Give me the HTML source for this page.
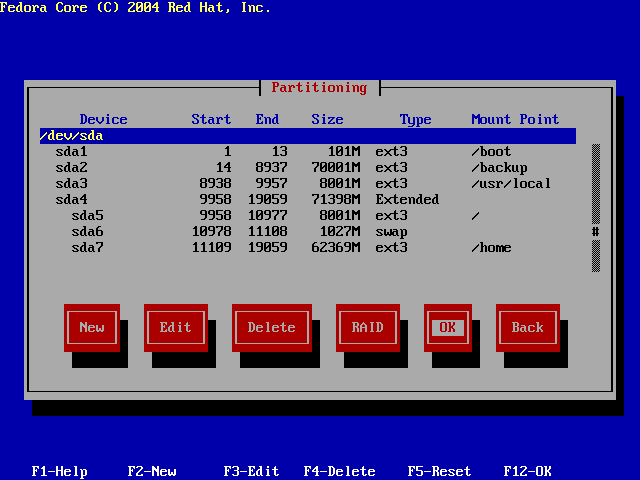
<!DOCTYPE html><html><head><meta charset="utf-8"><style>html,body{margin:0;padding:0;background:#0000aa;overflow:hidden;width:640px;height:480px}svg{display:block}</style></head><body>
<svg width="640" height="480" viewBox="0 0 640 480" shape-rendering="crispEdges">
<defs><path id="g0" d="M1 3h2v2h-2zM1 6h2v3h-2zM1 10h2v2h-2zM4 3h2v2h-2zM4 6h2v3h-2zM4 10h2v2h-2zM0 5h7v1h-7zM0 9h7v1h-7z"/><path id="g1" d="M4 2h2v1h-2zM4 11h2v1h-2zM3 3h2v1h-2zM3 10h2v1h-2zM2 4h2v6h-2z"/><path id="g2" d="M2 2h2v1h-2zM2 11h2v1h-2zM3 3h2v1h-2zM3 10h2v1h-2zM4 4h2v6h-2z"/><path id="g3" d="M3 9h2v3h-2zM2 12h2v1h-2z"/><path id="g4" d="M0 7h7v1h-7z"/><path id="g5" d="M3 10h2v2h-2z"/><path id="g6" d="M6 4h1v1h-1zM5 5h2v1h-2zM4 6h2v1h-2zM3 7h2v1h-2zM2 8h2v1h-2zM1 9h2v1h-2zM0 10h2v1h-2zM0 11h1v1h-1z"/><path id="g7" d="M1 2h5v1h-5zM1 11h5v1h-5zM0 3h2v4h-2zM0 9h2v2h-2zM5 3h2v2h-2zM5 7h2v4h-2zM4 5h3v1h-3zM3 6h4v1h-4zM0 7h4v1h-4zM0 8h3v1h-3z"/><path id="g8" d="M3 2h2v1h-2zM3 5h2v6h-2zM2 3h3v1h-3zM1 4h4v1h-4zM1 11h6v1h-6z"/><path id="g9" d="M1 2h5v1h-5zM0 3h2v1h-2zM0 9h2v2h-2zM5 3h2v2h-2zM5 10h2v1h-2zM4 5h2v1h-2zM3 6h2v1h-2zM2 7h2v1h-2zM1 8h2v1h-2zM0 11h7v1h-7z"/><path id="g10" d="M1 2h5v1h-5zM1 11h5v1h-5zM0 3h2v1h-2zM0 10h2v1h-2zM5 3h2v3h-2zM5 7h2v4h-2zM2 6h4v1h-4z"/><path id="g11" d="M4 2h2v1h-2zM4 5h2v2h-2zM4 8h2v3h-2zM3 3h3v1h-3zM2 4h4v1h-4zM1 5h2v1h-2zM0 6h2v1h-2zM0 7h7v1h-7zM3 11h4v1h-4z"/><path id="g12" d="M0 2h7v1h-7zM0 3h2v3h-2zM0 10h2v1h-2zM0 6h6v1h-6zM5 7h2v4h-2zM1 11h5v1h-5z"/><path id="g13" d="M2 2h3v1h-3zM1 3h2v1h-2zM0 4h2v2h-2zM0 7h2v4h-2zM0 6h6v1h-6zM5 7h2v4h-2zM1 11h5v1h-5z"/><path id="g14" d="M0 2h7v1h-7zM0 3h2v1h-2zM5 3h2v3h-2zM4 6h2v1h-2zM3 7h2v1h-2zM2 8h2v4h-2z"/><path id="g15" d="M1 2h5v1h-5zM1 6h5v1h-5zM1 11h5v1h-5zM0 3h2v3h-2zM0 7h2v4h-2zM5 3h2v3h-2zM5 7h2v4h-2z"/><path id="g16" d="M1 2h5v1h-5zM0 3h2v3h-2zM5 3h2v3h-2zM5 7h2v3h-2zM1 6h6v1h-6zM4 10h2v1h-2zM1 11h4v1h-4z"/><path id="g17" d="M3 2h1v1h-1zM2 3h3v1h-3zM1 4h2v1h-2zM4 4h2v1h-2zM0 5h2v2h-2zM0 8h2v4h-2zM5 5h2v2h-2zM5 8h2v4h-2zM0 7h7v1h-7z"/><path id="g18" d="M0 2h6v1h-6zM0 11h6v1h-6zM1 3h2v3h-2zM1 7h2v4h-2zM5 3h2v3h-2zM5 7h2v4h-2zM1 6h5v1h-5z"/><path id="g19" d="M2 2h4v1h-4zM2 11h4v1h-4zM1 3h2v1h-2zM1 10h2v1h-2zM5 3h2v1h-2zM5 10h2v1h-2zM0 4h2v6h-2zM6 4h1v1h-1zM6 9h1v1h-1z"/><path id="g20" d="M0 2h5v1h-5zM0 11h5v1h-5zM1 3h2v8h-2zM4 3h2v1h-2zM4 10h2v1h-2zM5 4h2v6h-2z"/><path id="g21" d="M0 2h7v1h-7zM0 11h7v1h-7zM1 3h2v3h-2zM1 7h2v4h-2zM5 3h2v1h-2zM5 10h2v1h-2zM6 4h1v1h-1zM6 9h1v1h-1zM4 5h1v1h-1zM4 7h1v1h-1zM1 6h4v1h-4z"/><path id="g22" d="M0 2h7v1h-7zM1 3h2v3h-2zM1 7h2v4h-2zM5 3h2v1h-2zM6 4h1v1h-1zM4 5h1v1h-1zM4 7h1v1h-1zM1 6h4v1h-4zM0 11h4v1h-4z"/><path id="g23" d="M0 2h2v4h-2zM0 7h2v5h-2zM5 2h2v4h-2zM5 7h2v5h-2zM0 6h7v1h-7z"/><path id="g24" d="M2 2h4v1h-4zM2 11h4v1h-4zM3 3h2v8h-2z"/><path id="g25" d="M0 2h3v1h-3zM0 11h3v1h-3zM5 2h2v3h-2zM5 9h2v3h-2zM1 3h2v3h-2zM1 8h2v3h-2zM4 5h2v1h-2zM4 8h2v1h-2zM1 6h4v2h-4z"/><path id="g26" d="M0 2h2v1h-2zM0 6h2v6h-2zM6 2h2v1h-2zM6 6h2v6h-2zM0 3h3v1h-3zM5 3h3v1h-3zM0 4h8v2h-8zM3 6h2v1h-2z"/><path id="g27" d="M0 2h2v1h-2zM0 6h2v6h-2zM5 2h2v3h-2zM5 8h2v4h-2zM0 3h3v1h-3zM0 4h4v1h-4zM0 5h7v1h-7zM3 6h4v1h-4zM4 7h3v1h-3z"/><path id="g28" d="M1 2h5v1h-5zM1 11h5v1h-5zM0 3h2v8h-2zM5 3h2v8h-2z"/><path id="g29" d="M0 2h6v1h-6zM1 3h2v3h-2zM1 7h2v4h-2zM5 3h2v3h-2zM1 6h5v1h-5zM0 11h4v1h-4z"/><path id="g30" d="M0 2h6v1h-6zM1 3h2v3h-2zM1 7h2v4h-2zM5 3h2v3h-2zM5 8h2v4h-2zM1 6h5v1h-5zM4 7h2v1h-2zM0 11h3v1h-3z"/><path id="g31" d="M1 2h5v1h-5zM1 11h5v1h-5zM0 3h2v2h-2zM0 9h2v2h-2zM5 3h2v2h-2zM5 8h2v3h-2zM1 5h2v1h-2zM2 6h3v1h-3zM4 7h2v1h-2z"/><path id="g32" d="M0 2h8v1h-8zM0 3h2v1h-2zM3 3h2v8h-2zM6 3h2v1h-2zM0 4h1v1h-1zM7 4h1v1h-1zM2 11h4v1h-4z"/><path id="g33" d="M1 5h4v1h-4zM4 6h2v1h-2zM4 8h2v3h-2zM1 7h5v1h-5zM0 8h2v3h-2zM1 11h3v1h-3zM5 11h2v1h-2z"/><path id="g34" d="M0 2h3v1h-3zM1 3h2v2h-2zM1 6h2v5h-2zM1 5h4v1h-4zM4 6h2v1h-2zM5 7h2v4h-2zM1 11h5v1h-5z"/><path id="g35" d="M1 5h5v1h-5zM1 11h5v1h-5zM0 6h2v5h-2zM5 6h2v1h-2zM5 10h2v1h-2z"/><path id="g36" d="M3 2h3v1h-3zM4 3h2v2h-2zM4 6h2v5h-2zM2 5h4v1h-4zM1 6h2v1h-2zM0 7h2v4h-2zM1 11h3v1h-3zM5 11h2v1h-2z"/><path id="g37" d="M1 5h5v1h-5zM1 11h5v1h-5zM0 6h2v1h-2zM0 8h2v3h-2zM5 6h2v1h-2zM5 10h2v1h-2zM0 7h7v1h-7z"/><path id="g38" d="M1 5h3v1h-3zM5 5h2v1h-2zM0 6h2v5h-2zM0 13h2v1h-2zM4 6h2v5h-2zM4 12h2v2h-2zM1 11h5v1h-5zM1 14h4v1h-4z"/><path id="g39" d="M0 2h3v1h-3zM0 11h3v1h-3zM1 3h2v3h-2zM1 7h2v4h-2zM4 5h2v1h-2zM1 6h3v1h-3zM5 6h2v6h-2z"/><path id="g40" d="M3 2h2v2h-2zM3 6h2v5h-2zM2 5h3v1h-3zM2 11h4v1h-4z"/><path id="g41" d="M0 2h3v1h-3zM0 11h3v1h-3zM1 3h2v4h-2zM1 9h2v2h-2zM5 5h2v1h-2zM5 10h2v2h-2zM4 6h2v1h-2zM4 9h2v1h-2zM1 7h4v2h-4z"/><path id="g42" d="M2 2h3v1h-3zM3 3h2v8h-2zM2 11h4v1h-4z"/><path id="g43" d="M0 5h3v1h-3zM5 5h2v1h-2zM0 6h8v1h-8zM0 7h2v5h-2zM3 7h2v5h-2zM6 7h2v5h-2z"/><path id="g44" d="M0 5h2v1h-2zM3 5h3v1h-3zM1 6h2v6h-2zM5 6h2v6h-2z"/><path id="g45" d="M1 5h5v1h-5zM1 11h5v1h-5zM0 6h2v5h-2zM5 6h2v5h-2z"/><path id="g46" d="M0 5h2v1h-2zM3 5h3v1h-3zM1 6h2v5h-2zM1 12h2v2h-2zM5 6h2v5h-2zM1 11h5v1h-5zM0 14h4v1h-4z"/><path id="g47" d="M0 5h2v1h-2zM3 5h3v1h-3zM1 6h3v1h-3zM5 6h2v2h-2zM1 7h2v4h-2zM0 11h4v1h-4z"/><path id="g48" d="M1 5h5v1h-5zM1 11h5v1h-5zM0 6h2v1h-2zM0 10h2v1h-2zM5 6h2v1h-2zM5 10h2v1h-2zM1 7h2v1h-2zM2 8h3v1h-3zM4 9h2v1h-2z"/><path id="g49" d="M3 2h1v1h-1zM2 3h2v2h-2zM2 6h2v5h-2zM0 5h6v1h-6zM5 10h2v1h-2zM3 11h3v1h-3z"/><path id="g50" d="M0 5h2v6h-2zM4 5h2v6h-2zM1 11h3v1h-3zM5 11h2v1h-2z"/><path id="g51" d="M0 5h2v4h-2zM6 5h2v4h-2zM1 9h2v1h-2zM5 9h2v1h-2zM2 10h4v1h-4zM3 11h2v1h-2z"/><path id="g52" d="M0 5h2v5h-2zM6 5h2v5h-2zM3 8h2v2h-2zM0 10h8v1h-8zM1 11h2v1h-2zM5 11h2v1h-2z"/><path id="g53" d="M0 5h2v1h-2zM0 11h2v1h-2zM6 5h2v1h-2zM6 11h2v1h-2zM1 6h2v1h-2zM1 10h2v1h-2zM5 6h2v1h-2zM5 10h2v1h-2zM2 7h4v1h-4zM2 9h4v1h-4zM3 8h2v1h-2z"/><path id="g54" d="M0 5h2v6h-2zM5 5h2v6h-2zM5 12h2v1h-2zM1 11h6v1h-6zM4 13h2v1h-2zM0 14h5v1h-5z"/><path id="g55" d="M0 5h7v1h-7zM0 11h7v1h-7zM0 6h2v1h-2zM0 10h2v1h-2zM4 6h2v1h-2zM3 7h2v1h-2zM2 8h2v1h-2zM1 9h2v1h-2zM5 10h2v1h-2z"/><path id="g56" d="M0 7h8v1h-8z"/><path id="g57" d="M3 0h2v16h-2z"/><path id="g58" d="M3 7h5v1h-5zM3 8h2v8h-2z"/><path id="g59" d="M0 7h5v1h-5zM3 8h2v8h-2z"/><path id="g60" d="M3 0h2v7h-2zM3 7h5v1h-5z"/><path id="g61" d="M3 0h2v7h-2zM0 7h5v1h-5z"/><path id="g62" d="M3 0h2v7h-2zM3 8h2v8h-2zM3 7h5v1h-5z"/><path id="g63" d="M3 0h2v7h-2zM3 8h2v8h-2zM0 7h5v1h-5z"/><path id="g64" d="M1 0h1v1h-1zM1 2h1v1h-1zM1 4h1v1h-1zM1 6h1v1h-1zM1 8h1v1h-1zM1 10h1v1h-1zM1 12h1v1h-1zM1 14h1v1h-1zM3 0h1v1h-1zM3 2h1v1h-1zM3 4h1v1h-1zM3 6h1v1h-1zM3 8h1v1h-1zM3 10h1v1h-1zM3 12h1v1h-1zM3 14h1v1h-1zM5 0h1v1h-1zM5 2h1v1h-1zM5 4h1v1h-1zM5 6h1v1h-1zM5 8h1v1h-1zM5 10h1v1h-1zM5 12h1v1h-1zM5 14h1v1h-1zM7 0h1v1h-1zM7 2h1v1h-1zM7 4h1v1h-1zM7 6h1v1h-1zM7 8h1v1h-1zM7 10h1v1h-1zM7 12h1v1h-1zM7 14h1v1h-1zM0 1h1v1h-1zM0 3h1v1h-1zM0 5h1v1h-1zM0 7h1v1h-1zM0 9h1v1h-1zM0 11h1v1h-1zM0 13h1v1h-1zM0 15h1v1h-1zM2 1h1v1h-1zM2 3h1v1h-1zM2 5h1v1h-1zM2 7h1v1h-1zM2 9h1v1h-1zM2 11h1v1h-1zM2 13h1v1h-1zM2 15h1v1h-1zM4 1h1v1h-1zM4 3h1v1h-1zM4 5h1v1h-1zM4 7h1v1h-1zM4 9h1v1h-1zM4 11h1v1h-1zM4 13h1v1h-1zM4 15h1v1h-1zM6 1h1v1h-1zM6 3h1v1h-1zM6 5h1v1h-1zM6 7h1v1h-1zM6 9h1v1h-1zM6 11h1v1h-1zM6 13h1v1h-1zM6 15h1v1h-1z"/></defs>
<rect width="640" height="480" fill="#0000aa"/>
<rect x="24" y="80" width="592" height="16" fill="#aaaaaa"/><rect x="24" y="96" width="592" height="16" fill="#aaaaaa"/><rect x="616" y="96" width="8" height="16" fill="#000000"/><rect x="24" y="112" width="592" height="16" fill="#aaaaaa"/><rect x="616" y="112" width="8" height="16" fill="#000000"/><rect x="24" y="128" width="16" height="16" fill="#aaaaaa"/><rect x="576" y="128" width="40" height="16" fill="#aaaaaa"/><rect x="616" y="128" width="8" height="16" fill="#000000"/><rect x="24" y="144" width="592" height="16" fill="#aaaaaa"/><rect x="616" y="144" width="8" height="16" fill="#000000"/><rect x="24" y="160" width="592" height="16" fill="#aaaaaa"/><rect x="616" y="160" width="8" height="16" fill="#000000"/><rect x="24" y="176" width="592" height="16" fill="#aaaaaa"/><rect x="616" y="176" width="8" height="16" fill="#000000"/><rect x="24" y="192" width="592" height="16" fill="#aaaaaa"/><rect x="616" y="192" width="8" height="16" fill="#000000"/><rect x="24" y="208" width="592" height="16" fill="#aaaaaa"/><rect x="616" y="208" width="8" height="16" fill="#000000"/><rect x="24" y="224" width="592" height="16" fill="#aaaaaa"/><rect x="616" y="224" width="8" height="16" fill="#000000"/><rect x="24" y="240" width="592" height="16" fill="#aaaaaa"/><rect x="616" y="240" width="8" height="16" fill="#000000"/><rect x="24" y="256" width="592" height="16" fill="#aaaaaa"/><rect x="616" y="256" width="8" height="16" fill="#000000"/><rect x="24" y="272" width="592" height="16" fill="#aaaaaa"/><rect x="616" y="272" width="8" height="16" fill="#000000"/><rect x="24" y="288" width="592" height="16" fill="#aaaaaa"/><rect x="616" y="288" width="8" height="16" fill="#000000"/><rect x="24" y="304" width="40" height="16" fill="#aaaaaa"/><rect x="64" y="304" width="56" height="16" fill="#aa0000"/><rect x="120" y="304" width="24" height="16" fill="#aaaaaa"/><rect x="144" y="304" width="64" height="16" fill="#aa0000"/><rect x="208" y="304" width="24" height="16" fill="#aaaaaa"/><rect x="232" y="304" width="80" height="16" fill="#aa0000"/><rect x="312" y="304" width="24" height="16" fill="#aaaaaa"/><rect x="336" y="304" width="64" height="16" fill="#aa0000"/><rect x="400" y="304" width="24" height="16" fill="#aaaaaa"/><rect x="424" y="304" width="48" height="16" fill="#aa0000"/><rect x="472" y="304" width="24" height="16" fill="#aaaaaa"/><rect x="496" y="304" width="64" height="16" fill="#aa0000"/><rect x="560" y="304" width="56" height="16" fill="#aaaaaa"/><rect x="616" y="304" width="8" height="16" fill="#000000"/><rect x="24" y="320" width="40" height="16" fill="#aaaaaa"/><rect x="64" y="320" width="56" height="16" fill="#aa0000"/><rect x="120" y="320" width="8" height="16" fill="#000000"/><rect x="128" y="320" width="16" height="16" fill="#aaaaaa"/><rect x="144" y="320" width="64" height="16" fill="#aa0000"/><rect x="208" y="320" width="8" height="16" fill="#000000"/><rect x="216" y="320" width="16" height="16" fill="#aaaaaa"/><rect x="232" y="320" width="80" height="16" fill="#aa0000"/><rect x="312" y="320" width="8" height="16" fill="#000000"/><rect x="320" y="320" width="16" height="16" fill="#aaaaaa"/><rect x="336" y="320" width="64" height="16" fill="#aa0000"/><rect x="400" y="320" width="8" height="16" fill="#000000"/><rect x="408" y="320" width="16" height="16" fill="#aaaaaa"/><rect x="424" y="320" width="8" height="16" fill="#aa0000"/><rect x="432" y="320" width="32" height="16" fill="#aaaaaa"/><rect x="464" y="320" width="8" height="16" fill="#aa0000"/><rect x="472" y="320" width="8" height="16" fill="#000000"/><rect x="480" y="320" width="16" height="16" fill="#aaaaaa"/><rect x="496" y="320" width="64" height="16" fill="#aa0000"/><rect x="560" y="320" width="8" height="16" fill="#000000"/><rect x="568" y="320" width="48" height="16" fill="#aaaaaa"/><rect x="616" y="320" width="8" height="16" fill="#000000"/><rect x="24" y="336" width="40" height="16" fill="#aaaaaa"/><rect x="64" y="336" width="56" height="16" fill="#aa0000"/><rect x="120" y="336" width="8" height="16" fill="#000000"/><rect x="128" y="336" width="16" height="16" fill="#aaaaaa"/><rect x="144" y="336" width="64" height="16" fill="#aa0000"/><rect x="208" y="336" width="8" height="16" fill="#000000"/><rect x="216" y="336" width="16" height="16" fill="#aaaaaa"/><rect x="232" y="336" width="80" height="16" fill="#aa0000"/><rect x="312" y="336" width="8" height="16" fill="#000000"/><rect x="320" y="336" width="16" height="16" fill="#aaaaaa"/><rect x="336" y="336" width="64" height="16" fill="#aa0000"/><rect x="400" y="336" width="8" height="16" fill="#000000"/><rect x="408" y="336" width="16" height="16" fill="#aaaaaa"/><rect x="424" y="336" width="48" height="16" fill="#aa0000"/><rect x="472" y="336" width="8" height="16" fill="#000000"/><rect x="480" y="336" width="16" height="16" fill="#aaaaaa"/><rect x="496" y="336" width="64" height="16" fill="#aa0000"/><rect x="560" y="336" width="8" height="16" fill="#000000"/><rect x="568" y="336" width="48" height="16" fill="#aaaaaa"/><rect x="616" y="336" width="8" height="16" fill="#000000"/><rect x="24" y="352" width="48" height="16" fill="#aaaaaa"/><rect x="72" y="352" width="56" height="16" fill="#000000"/><rect x="128" y="352" width="24" height="16" fill="#aaaaaa"/><rect x="152" y="352" width="64" height="16" fill="#000000"/><rect x="216" y="352" width="24" height="16" fill="#aaaaaa"/><rect x="240" y="352" width="80" height="16" fill="#000000"/><rect x="320" y="352" width="24" height="16" fill="#aaaaaa"/><rect x="344" y="352" width="64" height="16" fill="#000000"/><rect x="408" y="352" width="24" height="16" fill="#aaaaaa"/><rect x="432" y="352" width="48" height="16" fill="#000000"/><rect x="480" y="352" width="24" height="16" fill="#aaaaaa"/><rect x="504" y="352" width="64" height="16" fill="#000000"/><rect x="568" y="352" width="48" height="16" fill="#aaaaaa"/><rect x="616" y="352" width="8" height="16" fill="#000000"/><rect x="24" y="368" width="592" height="16" fill="#aaaaaa"/><rect x="616" y="368" width="8" height="16" fill="#000000"/><rect x="24" y="384" width="592" height="16" fill="#aaaaaa"/><rect x="616" y="384" width="8" height="16" fill="#000000"/><rect x="32" y="400" width="592" height="16" fill="#000000"/>
<g fill="#ffff55"><use href="#g22" x="0" y="0"/><use href="#g37" x="8" y="0"/><use href="#g36" x="16" y="0"/><use href="#g45" x="24" y="0"/><use href="#g47" x="32" y="0"/><use href="#g33" x="40" y="0"/><use href="#g19" x="56" y="0"/><use href="#g45" x="64" y="0"/><use href="#g47" x="72" y="0"/><use href="#g37" x="80" y="0"/><use href="#g1" x="96" y="0"/><use href="#g19" x="104" y="0"/><use href="#g2" x="112" y="0"/><use href="#g9" x="128" y="0"/><use href="#g7" x="136" y="0"/><use href="#g7" x="144" y="0"/><use href="#g11" x="152" y="0"/><use href="#g30" x="168" y="0"/><use href="#g37" x="176" y="0"/><use href="#g36" x="184" y="0"/><use href="#g23" x="200" y="0"/><use href="#g33" x="208" y="0"/><use href="#g49" x="216" y="0"/><use href="#g3" x="224" y="0"/><use href="#g24" x="240" y="0"/><use href="#g44" x="248" y="0"/><use href="#g35" x="256" y="0"/><use href="#g5" x="264" y="0"/><use href="#g6" x="40" y="128"/><use href="#g36" x="48" y="128"/><use href="#g37" x="56" y="128"/><use href="#g51" x="64" y="128"/><use href="#g6" x="72" y="128"/><use href="#g48" x="80" y="128"/><use href="#g36" x="88" y="128"/><use href="#g33" x="96" y="128"/></g>
<g fill="#000000"><use href="#g58" x="24" y="80"/><use href="#g56" x="32" y="80"/><use href="#g56" x="40" y="80"/><use href="#g56" x="48" y="80"/><use href="#g56" x="56" y="80"/><use href="#g56" x="64" y="80"/><use href="#g56" x="72" y="80"/><use href="#g56" x="80" y="80"/><use href="#g56" x="88" y="80"/><use href="#g56" x="96" y="80"/><use href="#g56" x="104" y="80"/><use href="#g56" x="112" y="80"/><use href="#g56" x="120" y="80"/><use href="#g56" x="128" y="80"/><use href="#g56" x="136" y="80"/><use href="#g56" x="144" y="80"/><use href="#g56" x="152" y="80"/><use href="#g56" x="160" y="80"/><use href="#g56" x="168" y="80"/><use href="#g56" x="176" y="80"/><use href="#g56" x="184" y="80"/><use href="#g56" x="192" y="80"/><use href="#g56" x="200" y="80"/><use href="#g56" x="208" y="80"/><use href="#g56" x="216" y="80"/><use href="#g56" x="224" y="80"/><use href="#g56" x="232" y="80"/><use href="#g56" x="240" y="80"/><use href="#g56" x="248" y="80"/><use href="#g63" x="256" y="80"/><use href="#g62" x="376" y="80"/><use href="#g56" x="384" y="80"/><use href="#g56" x="392" y="80"/><use href="#g56" x="400" y="80"/><use href="#g56" x="408" y="80"/><use href="#g56" x="416" y="80"/><use href="#g56" x="424" y="80"/><use href="#g56" x="432" y="80"/><use href="#g56" x="440" y="80"/><use href="#g56" x="448" y="80"/><use href="#g56" x="456" y="80"/><use href="#g56" x="464" y="80"/><use href="#g56" x="472" y="80"/><use href="#g56" x="480" y="80"/><use href="#g56" x="488" y="80"/><use href="#g56" x="496" y="80"/><use href="#g56" x="504" y="80"/><use href="#g56" x="512" y="80"/><use href="#g56" x="520" y="80"/><use href="#g56" x="528" y="80"/><use href="#g56" x="536" y="80"/><use href="#g56" x="544" y="80"/><use href="#g56" x="552" y="80"/><use href="#g56" x="560" y="80"/><use href="#g56" x="568" y="80"/><use href="#g56" x="576" y="80"/><use href="#g56" x="584" y="80"/><use href="#g56" x="592" y="80"/><use href="#g56" x="600" y="80"/><use href="#g59" x="608" y="80"/><use href="#g57" x="24" y="96"/><use href="#g57" x="608" y="96"/><use href="#g57" x="24" y="112"/><use href="#g57" x="608" y="112"/><use href="#g57" x="24" y="128"/><use href="#g57" x="608" y="128"/><use href="#g57" x="24" y="144"/><use href="#g48" x="56" y="144"/><use href="#g36" x="64" y="144"/><use href="#g33" x="72" y="144"/><use href="#g8" x="80" y="144"/><use href="#g8" x="224" y="144"/><use href="#g8" x="272" y="144"/><use href="#g10" x="280" y="144"/><use href="#g8" x="328" y="144"/><use href="#g7" x="336" y="144"/><use href="#g8" x="344" y="144"/><use href="#g26" x="352" y="144"/><use href="#g37" x="376" y="144"/><use href="#g53" x="384" y="144"/><use href="#g49" x="392" y="144"/><use href="#g10" x="400" y="144"/><use href="#g6" x="472" y="144"/><use href="#g34" x="480" y="144"/><use href="#g45" x="488" y="144"/><use href="#g45" x="496" y="144"/><use href="#g49" x="504" y="144"/><use href="#g64" x="592" y="144"/><use href="#g57" x="608" y="144"/><use href="#g57" x="24" y="160"/><use href="#g48" x="56" y="160"/><use href="#g36" x="64" y="160"/><use href="#g33" x="72" y="160"/><use href="#g9" x="80" y="160"/><use href="#g8" x="216" y="160"/><use href="#g11" x="224" y="160"/><use href="#g15" x="256" y="160"/><use href="#g16" x="264" y="160"/><use href="#g10" x="272" y="160"/><use href="#g14" x="280" y="160"/><use href="#g14" x="312" y="160"/><use href="#g7" x="320" y="160"/><use href="#g7" x="328" y="160"/><use href="#g7" x="336" y="160"/><use href="#g8" x="344" y="160"/><use href="#g26" x="352" y="160"/><use href="#g37" x="376" y="160"/><use href="#g53" x="384" y="160"/><use href="#g49" x="392" y="160"/><use href="#g10" x="400" y="160"/><use href="#g6" x="472" y="160"/><use href="#g34" x="480" y="160"/><use href="#g33" x="488" y="160"/><use href="#g35" x="496" y="160"/><use href="#g41" x="504" y="160"/><use href="#g50" x="512" y="160"/><use href="#g46" x="520" y="160"/><use href="#g64" x="592" y="160"/><use href="#g57" x="608" y="160"/><use href="#g57" x="24" y="176"/><use href="#g48" x="56" y="176"/><use href="#g36" x="64" y="176"/><use href="#g33" x="72" y="176"/><use href="#g10" x="80" y="176"/><use href="#g15" x="200" y="176"/><use href="#g16" x="208" y="176"/><use href="#g10" x="216" y="176"/><use href="#g15" x="224" y="176"/><use href="#g16" x="256" y="176"/><use href="#g16" x="264" y="176"/><use href="#g12" x="272" y="176"/><use href="#g14" x="280" y="176"/><use href="#g15" x="320" y="176"/><use href="#g7" x="328" y="176"/><use href="#g7" x="336" y="176"/><use href="#g8" x="344" y="176"/><use href="#g26" x="352" y="176"/><use href="#g37" x="376" y="176"/><use href="#g53" x="384" y="176"/><use href="#g49" x="392" y="176"/><use href="#g10" x="400" y="176"/><use href="#g6" x="472" y="176"/><use href="#g50" x="480" y="176"/><use href="#g48" x="488" y="176"/><use href="#g47" x="496" y="176"/><use href="#g6" x="504" y="176"/><use href="#g42" x="512" y="176"/><use href="#g45" x="520" y="176"/><use href="#g35" x="528" y="176"/><use href="#g33" x="536" y="176"/><use href="#g42" x="544" y="176"/><use href="#g64" x="592" y="176"/><use href="#g57" x="608" y="176"/><use href="#g57" x="24" y="192"/><use href="#g48" x="56" y="192"/><use href="#g36" x="64" y="192"/><use href="#g33" x="72" y="192"/><use href="#g11" x="80" y="192"/><use href="#g16" x="200" y="192"/><use href="#g16" x="208" y="192"/><use href="#g12" x="216" y="192"/><use href="#g15" x="224" y="192"/><use href="#g8" x="248" y="192"/><use href="#g16" x="256" y="192"/><use href="#g7" x="264" y="192"/><use href="#g12" x="272" y="192"/><use href="#g16" x="280" y="192"/><use href="#g14" x="312" y="192"/><use href="#g8" x="320" y="192"/><use href="#g10" x="328" y="192"/><use href="#g16" x="336" y="192"/><use href="#g15" x="344" y="192"/><use href="#g26" x="352" y="192"/><use href="#g21" x="376" y="192"/><use href="#g53" x="384" y="192"/><use href="#g49" x="392" y="192"/><use href="#g37" x="400" y="192"/><use href="#g44" x="408" y="192"/><use href="#g36" x="416" y="192"/><use href="#g37" x="424" y="192"/><use href="#g36" x="432" y="192"/><use href="#g64" x="592" y="192"/><use href="#g57" x="608" y="192"/><use href="#g57" x="24" y="208"/><use href="#g48" x="72" y="208"/><use href="#g36" x="80" y="208"/><use href="#g33" x="88" y="208"/><use href="#g12" x="96" y="208"/><use href="#g16" x="200" y="208"/><use href="#g16" x="208" y="208"/><use href="#g12" x="216" y="208"/><use href="#g15" x="224" y="208"/><use href="#g8" x="248" y="208"/><use href="#g7" x="256" y="208"/><use href="#g16" x="264" y="208"/><use href="#g14" x="272" y="208"/><use href="#g14" x="280" y="208"/><use href="#g15" x="320" y="208"/><use href="#g7" x="328" y="208"/><use href="#g7" x="336" y="208"/><use href="#g8" x="344" y="208"/><use href="#g26" x="352" y="208"/><use href="#g37" x="376" y="208"/><use href="#g53" x="384" y="208"/><use href="#g49" x="392" y="208"/><use href="#g10" x="400" y="208"/><use href="#g6" x="472" y="208"/><use href="#g64" x="592" y="208"/><use href="#g57" x="608" y="208"/><use href="#g57" x="24" y="224"/><use href="#g48" x="72" y="224"/><use href="#g36" x="80" y="224"/><use href="#g33" x="88" y="224"/><use href="#g13" x="96" y="224"/><use href="#g8" x="192" y="224"/><use href="#g7" x="200" y="224"/><use href="#g16" x="208" y="224"/><use href="#g14" x="216" y="224"/><use href="#g15" x="224" y="224"/><use href="#g8" x="248" y="224"/><use href="#g8" x="256" y="224"/><use href="#g8" x="264" y="224"/><use href="#g7" x="272" y="224"/><use href="#g15" x="280" y="224"/><use href="#g8" x="320" y="224"/><use href="#g7" x="328" y="224"/><use href="#g9" x="336" y="224"/><use href="#g14" x="344" y="224"/><use href="#g26" x="352" y="224"/><use href="#g48" x="376" y="224"/><use href="#g52" x="384" y="224"/><use href="#g33" x="392" y="224"/><use href="#g46" x="400" y="224"/><use href="#g0" x="592" y="224"/><use href="#g57" x="608" y="224"/><use href="#g57" x="24" y="240"/><use href="#g48" x="72" y="240"/><use href="#g36" x="80" y="240"/><use href="#g33" x="88" y="240"/><use href="#g14" x="96" y="240"/><use href="#g8" x="192" y="240"/><use href="#g8" x="200" y="240"/><use href="#g8" x="208" y="240"/><use href="#g7" x="216" y="240"/><use href="#g16" x="224" y="240"/><use href="#g8" x="248" y="240"/><use href="#g16" x="256" y="240"/><use href="#g7" x="264" y="240"/><use href="#g12" x="272" y="240"/><use href="#g16" x="280" y="240"/><use href="#g13" x="312" y="240"/><use href="#g9" x="320" y="240"/><use href="#g10" x="328" y="240"/><use href="#g13" x="336" y="240"/><use href="#g16" x="344" y="240"/><use href="#g26" x="352" y="240"/><use href="#g37" x="376" y="240"/><use href="#g53" x="384" y="240"/><use href="#g49" x="392" y="240"/><use href="#g10" x="400" y="240"/><use href="#g6" x="472" y="240"/><use href="#g39" x="480" y="240"/><use href="#g45" x="488" y="240"/><use href="#g43" x="496" y="240"/><use href="#g37" x="504" y="240"/><use href="#g64" x="592" y="240"/><use href="#g57" x="608" y="240"/><use href="#g57" x="24" y="256"/><use href="#g64" x="592" y="256"/><use href="#g57" x="608" y="256"/><use href="#g57" x="24" y="272"/><use href="#g57" x="608" y="272"/><use href="#g57" x="24" y="288"/><use href="#g57" x="608" y="288"/><use href="#g57" x="24" y="304"/><use href="#g57" x="608" y="304"/><use href="#g57" x="24" y="320"/><use href="#g57" x="608" y="320"/><use href="#g57" x="24" y="336"/><use href="#g57" x="608" y="336"/><use href="#g57" x="24" y="352"/><use href="#g57" x="608" y="352"/><use href="#g57" x="24" y="368"/><use href="#g57" x="608" y="368"/><use href="#g60" x="24" y="384"/><use href="#g56" x="32" y="384"/><use href="#g56" x="40" y="384"/><use href="#g56" x="48" y="384"/><use href="#g56" x="56" y="384"/><use href="#g56" x="64" y="384"/><use href="#g56" x="72" y="384"/><use href="#g56" x="80" y="384"/><use href="#g56" x="88" y="384"/><use href="#g56" x="96" y="384"/><use href="#g56" x="104" y="384"/><use href="#g56" x="112" y="384"/><use href="#g56" x="120" y="384"/><use href="#g56" x="128" y="384"/><use href="#g56" x="136" y="384"/><use href="#g56" x="144" y="384"/><use href="#g56" x="152" y="384"/><use href="#g56" x="160" y="384"/><use href="#g56" x="168" y="384"/><use href="#g56" x="176" y="384"/><use href="#g56" x="184" y="384"/><use href="#g56" x="192" y="384"/><use href="#g56" x="200" y="384"/><use href="#g56" x="208" y="384"/><use href="#g56" x="216" y="384"/><use href="#g56" x="224" y="384"/><use href="#g56" x="232" y="384"/><use href="#g56" x="240" y="384"/><use href="#g56" x="248" y="384"/><use href="#g56" x="256" y="384"/><use href="#g56" x="264" y="384"/><use href="#g56" x="272" y="384"/><use href="#g56" x="280" y="384"/><use href="#g56" x="288" y="384"/><use href="#g56" x="296" y="384"/><use href="#g56" x="304" y="384"/><use href="#g56" x="312" y="384"/><use href="#g56" x="320" y="384"/><use href="#g56" x="328" y="384"/><use href="#g56" x="336" y="384"/><use href="#g56" x="344" y="384"/><use href="#g56" x="352" y="384"/><use href="#g56" x="360" y="384"/><use href="#g56" x="368" y="384"/><use href="#g56" x="376" y="384"/><use href="#g56" x="384" y="384"/><use href="#g56" x="392" y="384"/><use href="#g56" x="400" y="384"/><use href="#g56" x="408" y="384"/><use href="#g56" x="416" y="384"/><use href="#g56" x="424" y="384"/><use href="#g56" x="432" y="384"/><use href="#g56" x="440" y="384"/><use href="#g56" x="448" y="384"/><use href="#g56" x="456" y="384"/><use href="#g56" x="464" y="384"/><use href="#g56" x="472" y="384"/><use href="#g56" x="480" y="384"/><use href="#g56" x="488" y="384"/><use href="#g56" x="496" y="384"/><use href="#g56" x="504" y="384"/><use href="#g56" x="512" y="384"/><use href="#g56" x="520" y="384"/><use href="#g56" x="528" y="384"/><use href="#g56" x="536" y="384"/><use href="#g56" x="544" y="384"/><use href="#g56" x="552" y="384"/><use href="#g56" x="560" y="384"/><use href="#g56" x="568" y="384"/><use href="#g56" x="576" y="384"/><use href="#g56" x="584" y="384"/><use href="#g56" x="592" y="384"/><use href="#g56" x="600" y="384"/><use href="#g61" x="608" y="384"/></g>
<g fill="#aa0000"><use href="#g29" x="272" y="80"/><use href="#g33" x="280" y="80"/><use href="#g47" x="288" y="80"/><use href="#g49" x="296" y="80"/><use href="#g40" x="304" y="80"/><use href="#g49" x="312" y="80"/><use href="#g40" x="320" y="80"/><use href="#g45" x="328" y="80"/><use href="#g44" x="336" y="80"/><use href="#g40" x="344" y="80"/><use href="#g44" x="352" y="80"/><use href="#g38" x="360" y="80"/><use href="#g28" x="440" y="320"/><use href="#g25" x="448" y="320"/></g>
<g fill="#0000aa"><use href="#g20" x="80" y="112"/><use href="#g37" x="88" y="112"/><use href="#g51" x="96" y="112"/><use href="#g40" x="104" y="112"/><use href="#g35" x="112" y="112"/><use href="#g37" x="120" y="112"/><use href="#g31" x="192" y="112"/><use href="#g49" x="200" y="112"/><use href="#g33" x="208" y="112"/><use href="#g47" x="216" y="112"/><use href="#g49" x="224" y="112"/><use href="#g21" x="256" y="112"/><use href="#g44" x="264" y="112"/><use href="#g36" x="272" y="112"/><use href="#g31" x="312" y="112"/><use href="#g40" x="320" y="112"/><use href="#g55" x="328" y="112"/><use href="#g37" x="336" y="112"/><use href="#g32" x="400" y="112"/><use href="#g54" x="408" y="112"/><use href="#g46" x="416" y="112"/><use href="#g37" x="424" y="112"/><use href="#g26" x="472" y="112"/><use href="#g45" x="480" y="112"/><use href="#g50" x="488" y="112"/><use href="#g44" x="496" y="112"/><use href="#g49" x="504" y="112"/><use href="#g29" x="520" y="112"/><use href="#g45" x="528" y="112"/><use href="#g40" x="536" y="112"/><use href="#g44" x="544" y="112"/><use href="#g49" x="552" y="112"/></g>
<g fill="#aaaaaa"><use href="#g58" x="64" y="304"/><use href="#g56" x="72" y="304"/><use href="#g56" x="80" y="304"/><use href="#g56" x="88" y="304"/><use href="#g56" x="96" y="304"/><use href="#g56" x="104" y="304"/><use href="#g59" x="112" y="304"/><use href="#g58" x="144" y="304"/><use href="#g56" x="152" y="304"/><use href="#g56" x="160" y="304"/><use href="#g56" x="168" y="304"/><use href="#g56" x="176" y="304"/><use href="#g56" x="184" y="304"/><use href="#g56" x="192" y="304"/><use href="#g59" x="200" y="304"/><use href="#g58" x="232" y="304"/><use href="#g56" x="240" y="304"/><use href="#g56" x="248" y="304"/><use href="#g56" x="256" y="304"/><use href="#g56" x="264" y="304"/><use href="#g56" x="272" y="304"/><use href="#g56" x="280" y="304"/><use href="#g56" x="288" y="304"/><use href="#g56" x="296" y="304"/><use href="#g59" x="304" y="304"/><use href="#g58" x="336" y="304"/><use href="#g56" x="344" y="304"/><use href="#g56" x="352" y="304"/><use href="#g56" x="360" y="304"/><use href="#g56" x="368" y="304"/><use href="#g56" x="376" y="304"/><use href="#g56" x="384" y="304"/><use href="#g59" x="392" y="304"/><use href="#g58" x="424" y="304"/><use href="#g56" x="432" y="304"/><use href="#g56" x="440" y="304"/><use href="#g56" x="448" y="304"/><use href="#g56" x="456" y="304"/><use href="#g59" x="464" y="304"/><use href="#g58" x="496" y="304"/><use href="#g56" x="504" y="304"/><use href="#g56" x="512" y="304"/><use href="#g56" x="520" y="304"/><use href="#g56" x="528" y="304"/><use href="#g56" x="536" y="304"/><use href="#g56" x="544" y="304"/><use href="#g59" x="552" y="304"/><use href="#g57" x="64" y="320"/><use href="#g27" x="80" y="320"/><use href="#g37" x="88" y="320"/><use href="#g52" x="96" y="320"/><use href="#g57" x="112" y="320"/><use href="#g57" x="144" y="320"/><use href="#g21" x="160" y="320"/><use href="#g36" x="168" y="320"/><use href="#g40" x="176" y="320"/><use href="#g49" x="184" y="320"/><use href="#g57" x="200" y="320"/><use href="#g57" x="232" y="320"/><use href="#g20" x="248" y="320"/><use href="#g37" x="256" y="320"/><use href="#g42" x="264" y="320"/><use href="#g37" x="272" y="320"/><use href="#g49" x="280" y="320"/><use href="#g37" x="288" y="320"/><use href="#g57" x="304" y="320"/><use href="#g57" x="336" y="320"/><use href="#g30" x="352" y="320"/><use href="#g17" x="360" y="320"/><use href="#g24" x="368" y="320"/><use href="#g20" x="376" y="320"/><use href="#g57" x="392" y="320"/><use href="#g57" x="424" y="320"/><use href="#g57" x="464" y="320"/><use href="#g57" x="496" y="320"/><use href="#g18" x="512" y="320"/><use href="#g33" x="520" y="320"/><use href="#g35" x="528" y="320"/><use href="#g41" x="536" y="320"/><use href="#g57" x="552" y="320"/><use href="#g60" x="64" y="336"/><use href="#g56" x="72" y="336"/><use href="#g56" x="80" y="336"/><use href="#g56" x="88" y="336"/><use href="#g56" x="96" y="336"/><use href="#g56" x="104" y="336"/><use href="#g61" x="112" y="336"/><use href="#g60" x="144" y="336"/><use href="#g56" x="152" y="336"/><use href="#g56" x="160" y="336"/><use href="#g56" x="168" y="336"/><use href="#g56" x="176" y="336"/><use href="#g56" x="184" y="336"/><use href="#g56" x="192" y="336"/><use href="#g61" x="200" y="336"/><use href="#g60" x="232" y="336"/><use href="#g56" x="240" y="336"/><use href="#g56" x="248" y="336"/><use href="#g56" x="256" y="336"/><use href="#g56" x="264" y="336"/><use href="#g56" x="272" y="336"/><use href="#g56" x="280" y="336"/><use href="#g56" x="288" y="336"/><use href="#g56" x="296" y="336"/><use href="#g61" x="304" y="336"/><use href="#g60" x="336" y="336"/><use href="#g56" x="344" y="336"/><use href="#g56" x="352" y="336"/><use href="#g56" x="360" y="336"/><use href="#g56" x="368" y="336"/><use href="#g56" x="376" y="336"/><use href="#g56" x="384" y="336"/><use href="#g61" x="392" y="336"/><use href="#g60" x="424" y="336"/><use href="#g56" x="432" y="336"/><use href="#g56" x="440" y="336"/><use href="#g56" x="448" y="336"/><use href="#g56" x="456" y="336"/><use href="#g61" x="464" y="336"/><use href="#g60" x="496" y="336"/><use href="#g56" x="504" y="336"/><use href="#g56" x="512" y="336"/><use href="#g56" x="520" y="336"/><use href="#g56" x="528" y="336"/><use href="#g56" x="536" y="336"/><use href="#g56" x="544" y="336"/><use href="#g61" x="552" y="336"/></g>
<g fill="#ffffff"><use href="#g22" x="32" y="464"/><use href="#g8" x="40" y="464"/><use href="#g4" x="48" y="464"/><use href="#g23" x="56" y="464"/><use href="#g37" x="64" y="464"/><use href="#g42" x="72" y="464"/><use href="#g46" x="80" y="464"/><use href="#g22" x="128" y="464"/><use href="#g9" x="136" y="464"/><use href="#g4" x="144" y="464"/><use href="#g27" x="152" y="464"/><use href="#g37" x="160" y="464"/><use href="#g52" x="168" y="464"/><use href="#g22" x="224" y="464"/><use href="#g10" x="232" y="464"/><use href="#g4" x="240" y="464"/><use href="#g21" x="248" y="464"/><use href="#g36" x="256" y="464"/><use href="#g40" x="264" y="464"/><use href="#g49" x="272" y="464"/><use href="#g22" x="304" y="464"/><use href="#g11" x="312" y="464"/><use href="#g4" x="320" y="464"/><use href="#g20" x="328" y="464"/><use href="#g37" x="336" y="464"/><use href="#g42" x="344" y="464"/><use href="#g37" x="352" y="464"/><use href="#g49" x="360" y="464"/><use href="#g37" x="368" y="464"/><use href="#g22" x="408" y="464"/><use href="#g12" x="416" y="464"/><use href="#g4" x="424" y="464"/><use href="#g30" x="432" y="464"/><use href="#g37" x="440" y="464"/><use href="#g48" x="448" y="464"/><use href="#g37" x="456" y="464"/><use href="#g49" x="464" y="464"/><use href="#g22" x="504" y="464"/><use href="#g8" x="512" y="464"/><use href="#g9" x="520" y="464"/><use href="#g4" x="528" y="464"/><use href="#g28" x="536" y="464"/><use href="#g25" x="544" y="464"/></g>
</svg></body></html>
